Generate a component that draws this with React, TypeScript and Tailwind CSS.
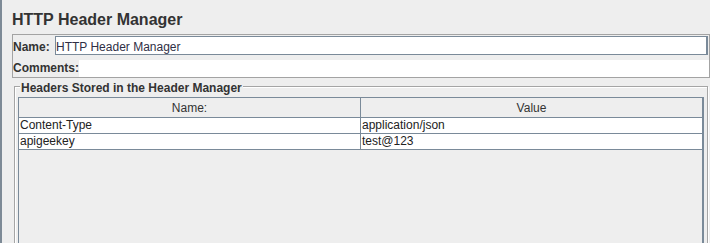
const headers = [
  { name: 'Content-Type', value: 'application/json' },
  { name: 'apigeekey', value: 'test@123' },
];

export default function App() {
  return (
    <div className="flex w-[710px] h-[243px] overflow-hidden bg-[#eeeeee] text-[#333333] font-['Liberation_Sans',Arial,sans-serif]">
      <div className="w-[2px] shrink-0 bg-[#7d8a96]" />
      <div className="flex-1 flex flex-col pl-[10px]">
        <div className="pt-[12px] mb-[6px] text-[16px] leading-[16px] font-bold">HTTP Header Manager</div>

        <div className="w-[698px] h-[44px] shrink-0 border border-[#a3a3a3] flex flex-col text-[12px]">
          <div className="h-[25px] flex items-start pt-[1px]">
            <div className="w-[42px] pt-[4px] leading-[14px] font-bold">Name:</div>
            <div className="w-[653px] h-[19px] border border-r-2 border-[#7a8a99] bg-white pt-[3px] leading-[14px] text-[#2f2f45] whitespace-nowrap">
              HTTP Header Manager
            </div>
          </div>
          <div className="h-[17px] flex">
            <div className="w-[66px] leading-[17px] font-bold">Comments:</div>
            <div className="flex-1 bg-white" />
          </div>
        </div>

        <div className="relative mt-[8px] ml-[2px] w-[694px] h-[200px] shrink-0 border border-[#a5a5a5] shadow-[1px_1px_0_0_#ffffff] text-[12px]">
          <div className="absolute top-[-6px] left-[5px] px-[1px] bg-[#eeeeee] leading-[14px] font-bold">
            Headers Stored in the Header Manager
          </div>
          <div className="h-full border-l border-t border-white pl-[2px] pt-[9px] pr-[3px]">
            <div className="h-full flex flex-col border-l border-t border-r-2 border-[#7a8a99]">
              <div className="h-[20px] flex border-b border-[#7a8a99]">
                <div className="w-[342px] border-r border-[#7a8a99] text-center pt-[2px] leading-[17px]">Name:</div>
                <div className="flex-1 text-center pt-[2px] leading-[17px]">Value</div>
              </div>
              {headers.map((h) => (
                <div key={h.name} className="h-[16px] flex border-b border-[#7a8a99] bg-white text-[#222222]">
                  <div className="w-[342px] border-r border-[#7a8a99] pl-[1px] leading-[15px]">{h.name}</div>
                  <div className="flex-1 pl-[1px] leading-[15px]">{h.value}</div>
                </div>
              ))}
            </div>
          </div>
        </div>
      </div>
    </div>
  );
}
